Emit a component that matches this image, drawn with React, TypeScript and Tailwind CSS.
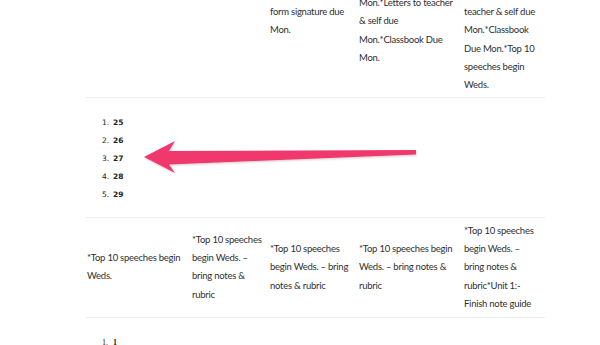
import React from "react";

const cell = "text-[9.5px] leading-[18.3px] tracking-[-0.25px] text-[#2f2f2f] whitespace-nowrap";

function Lines({ lines }: { lines: string[] }) {
  return (
    <div className={cell}>
      {lines.map((l, i) => (
        <div key={i}>{l}</div>
      ))}
    </div>
  );
}

const grid = "grid grid-cols-[105px_78px_89px_105px_82px] items-center border-b border-[#ececec]";

export default function App() {
  const items = ["25", "26", "27", "28", "29"];
  return (
    <div className="relative w-[600px] h-[345px] overflow-hidden bg-white" style={{ fontFamily: "Lato, 'Open Sans', sans-serif" }}>
      <div className="ml-[86px] w-[459px] -mt-[56px]">
        <div className={`${grid} pt-[4.25px] pb-[2.25px]`}>
          <div />
          <div />
          <div className="pl-[1px]"><Lines lines={["form signature due", "Mon."]} /></div>
          <div className="pl-[1px]"><Lines lines={["*Permission slip due", "Mon.*Letters to teacher", "& self due", "Mon.*Classbook Due", "Mon."]} /></div>
          <div className="pl-[1px]"><Lines lines={["*Syllabus &", "permission form", "Mon.*Letters to", "teacher & self due", "Mon.*Classbook", "Due Mon.*Top 10", "speeches begin", "Weds."]} /></div>
        </div>
        <div className="border-b border-[#ececec] h-[120px] pt-[16px] pl-[16px]" style={{ fontFamily: "'DejaVu Sans', Verdana, sans-serif" }}>
          {items.map((n, i) => (
            <div key={n} className="flex h-[18px] items-center text-[7.5px] text-[#222]">
              <span className="w-[11px]">{i + 1}.</span>
              <span className="font-bold">{n}</span>
            </div>
          ))}
        </div>
        <div className={`${grid} h-[100px]`}>
          <div className="pl-[1px]"><Lines lines={["*Top 10 speeches begin", "Weds."]} /></div>
          <div className="pl-[1px]"><Lines lines={["*Top 10 speeches", "begin Weds. –", "bring notes &", "rubric"]} /></div>
          <div className="pl-[1px]"><Lines lines={["*Top 10 speeches", "begin Weds. – bring", "notes & rubric"]} /></div>
          <div className="pl-[1px]"><Lines lines={["*Top 10 speeches begin", "Weds. – bring notes &", "rubric"]} /></div>
          <div className="pl-[1px]"><Lines lines={["*Top 10 speeches", "begin Weds. –", "bring notes &", "rubric*Unit 1:-", "Finish note guide"]} /></div>
        </div>
        <div className="pt-[16px] pl-[16px] flex items-center h-[18px] box-content text-[8px] text-[#222]" style={{ fontFamily: "'Liberation Serif', serif" }}>
          <span className="w-[11px]">1.</span>
          <span className="font-bold">1</span>
        </div>
      </div>
      <svg className="absolute top-0 left-0" width="600" height="345" viewBox="0 0 600 345">
        <defs>
          <filter id="sh" x="-10%" y="-50%" width="120%" height="200%">
            <feDropShadow dx="0.5" dy="1" stdDeviation="1" floodColor="#000" floodOpacity="0.2" />
          </filter>
        </defs>
        <polygon
          points="144,157 175,141 169,151 416,150 416,154.5 169,164.5 175,173"
          fill="#f1386c"
          filter="url(#sh)"
        />
      </svg>
    </div>
  );
}
